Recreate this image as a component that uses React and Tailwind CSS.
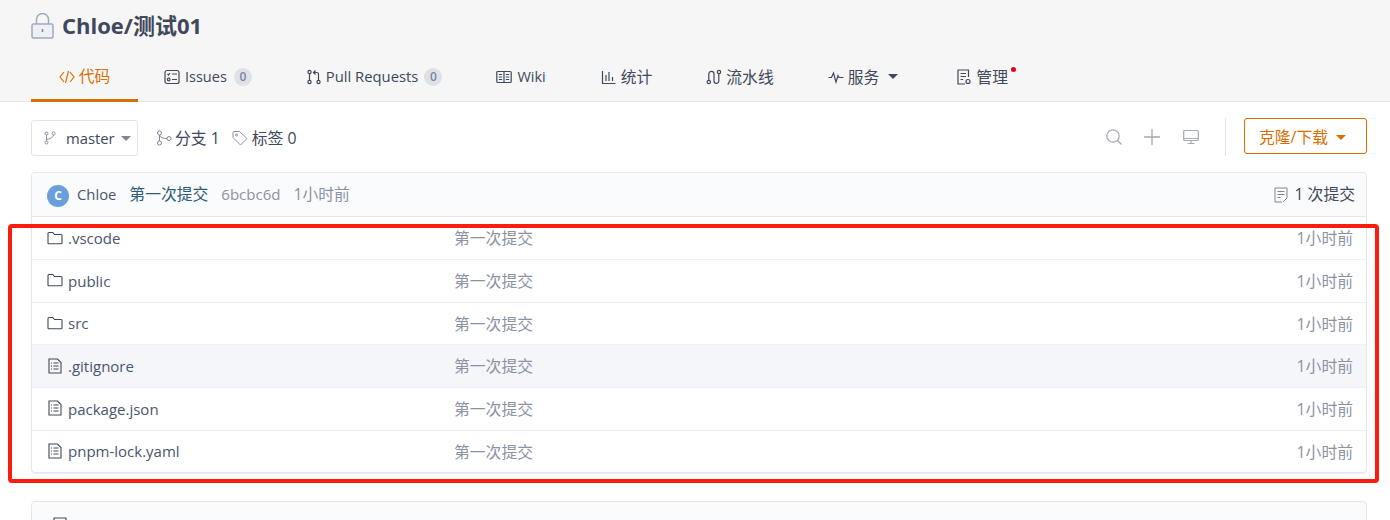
const font = "font-['Open_Sans','Noto_Sans_CJK_SC',sans-serif]"
const cjk = 'text-[15.8px]'

function LockIcon() {
    return (
        <svg width="24" height="26" viewBox="0 0 24 26" fill="none" stroke="#a3a9bc" strokeWidth="1.5">
            <rect x="1" y="11" width="21" height="14" rx="1.5" fill="#eef0f5" />
            <path d="M5.5 11V6.500a6 6 0 0 1 12 0V11" />
            <path d="M11.500 16v3" stroke="#7b8299" />
        </svg>
    )
}

const stroke = { fill: 'none', stroke: 'currentColor', strokeWidth: 1.2 }

const icons = {
    code: <path d="M5 3 1 8l4 5M11 3l4 5-4 5M9.500 2 6.500 14" {...stroke} />,
    issues: (
        <g {...stroke}>
            <rect x="1" y="1.500" width="14" height="13" rx="2" />
            <path d="m3.500 5 1 1 1.500-2M8 5h5M8 10.500h5" />
            <circle cx="4.700" cy="10.500" r="1.300" />
        </g>
    ),
    pull: (
        <g {...stroke}>
            <circle cx="3.500" cy="3" r="1.600" />
            <circle cx="3.500" cy="13" r="1.600" />
            <circle cx="12.500" cy="13" r="1.600" />
            <path d="M3.500 4.600v6.800M12.500 11.400V5.500q0-2-2-2H8M9.500 1.500l-2 2 2 2" />
        </g>
    ),
    wiki: (
        <g {...stroke}>
            <rect x="0.800" y="2.500" width="14.400" height="11" rx="1" />
            <path d="M8 2.500v11M2.800 5.500h3.400M2.800 8h3.400M2.800 10.500h3.400M9.800 5.500h3.400M9.800 8h3.400M9.800 10.500h3.400" />
        </g>
    ),
    stats: <path d="M1.500 2v12.500h13M5 12V6M8 12V3M11.500 12V8" {...stroke} />,
    pipeline: (
        <g {...stroke}>
            <circle cx="2.800" cy="13" r="1.700" />
            <circle cx="13" cy="3" r="1.700" />
            <path d="M2.800 11.300V5a2.600 2.600 0 0 1 5.200 0v7a2.400 2.400 0 0 0 4.800 0V4.700" />
        </g>
    ),
    service: <path d="M0.500 8.500h3l2-4.500 2.500 9 2-6.500 1 2h4.500" {...stroke} />,
    manage: (
        <g {...stroke}>
            <path d="M9 15H2V1h10.500v7" />
            <path d="M4.500 4.500h5.500M4.500 7.500h5.500M4.500 10.500h2.500" />
            <circle cx="12" cy="12.500" r="2" />
        </g>
    ),
}

function TabIcon({ name }) {
    return (
        <svg width="16" height="16" viewBox="0 0 16 16" className="shrink-0">
            {icons[name]}
        </svg>
    )
}

function Caret({ className }) {
    return <span className={`inline-block w-0 h-0 border-x-[5px] border-x-transparent border-t-[5px] ${className}`} />
}

function Count({ n, className }) {
    return <span className={`w-[18px] h-[18px] rounded-full bg-[#dfe1e6] text-[#7c84a3] text-[12px] font-semibold flex items-center justify-center ${className}`}>{n}</span>
}

function Tabs() {
    return (
        <div className="flex h-[49px] items-stretch text-[#40485b] text-[14.5px]">
            <div className="w-[107px] h-[50px] border-b-[3px] border-[#da6f00] text-[#da6f00] flex items-center justify-center gap-[4px] pt-[2px]">
                <TabIcon name="code" />
                <span className={cjk}>代码</span>
            </div>
            <div className="ml-[26px] flex items-center gap-[5px]">
                <TabIcon name="issues" />
                <span>Issues</span>
                <Count n="0" className="ml-[2px]" />
            </div>
            <div className="ml-[54px] flex items-center gap-[4px]">
                <TabIcon name="pull" />
                <span className="text-[14.8px]">Pull Requests</span>
                <Count n="0" className="ml-[2px]" />
            </div>
            <div className="ml-[54px] flex items-center gap-[5px]">
                <TabIcon name="wiki" />
                <span>Wiki</span>
            </div>
            <div className="ml-[55px] flex items-center gap-[4px]">
                <TabIcon name="stats" />
                <span className={`pt-[2px] ${cjk}`}>统计</span>
            </div>
            <div className="ml-[54px] flex items-center gap-[4px]">
                <TabIcon name="pipeline" />
                <span className={`pt-[2px] ${cjk}`}>流水线</span>
            </div>
            <div className="ml-[54px] flex items-center gap-[4px]">
                <TabIcon name="service" />
                <span className={`pt-[2px] ${cjk}`}>服务</span>
                <Caret className="ml-[5px] border-t-[#40485b]" />
            </div>
            <div className="ml-[58px] flex items-center gap-[4px] relative">
                <TabIcon name="manage" />
                <span className={`pt-[2px] ${cjk}`}>管理</span>
                <span className="absolute right-[-8px] top-[15px] w-[5px] h-[5px] rounded-full bg-[#e0001b]" />
            </div>
        </div>
    )
}

function FolderIcon() {
    return (
        <svg width="16" height="16" viewBox="0 0 16 16" fill="none" stroke="#40485b" strokeWidth="1.100" className="shrink-0">
            <path d="M1 13V3.500a1 1 0 0 1 1-1h3.800l1.700 2H14a1 1 0 0 1 1 1V13a.8.8 0 0 1-.8.8H1.800A.8.8 0 0 1 1 13Z" />
        </svg>
    )
}

function FileIcon() {
    return (
        <svg width="16" height="16" viewBox="0 0 16 16" fill="none" stroke="#40485b" strokeWidth="1.100" className="shrink-0">
            <path d="M2 1h8.500L14 4.500V15H2Z" />
            <path d="M4 5h1M4 8h1M4 11h1M6.500 5h5M6.500 8h5M6.500 11h5" />
        </svg>
    )
}

const files = [
    { name: '.vscode', folder: true },
    { name: 'public', folder: true },
    { name: 'src', folder: true },
    { name: '.gitignore', hover: true },
    { name: 'package.json' },
    { name: 'pnpm-lock.yaml' },
]

function FileRow({ file, first }) {
    return (
        <div className={`flex items-center pl-[15px] pr-[13px] ${first ? 'h-[42px]' : 'h-[42.7px] border-t border-[#f0f1f4]'} ${file.hover ? 'bg-[#f5f6f9]' : ''}`}>
            <div className="w-[407px] flex items-center gap-[5px]">
                <div className="-mt-[1px]">{file.folder ? <FolderIcon /> : <FileIcon />}</div>
                <span className="text-[15px] text-[#4a5570]">{file.name}</span>
            </div>
            <span className={`${cjk} pt-[2px] text-[#8c92a4]`}>第一次提交</span>
            <span className={`${cjk} pt-[2px] ml-auto text-[#8c92a4]`}>1小时前</span>
        </div>
    )
}

export default function App() {
    return (
        <div className={`relative w-[1390px] h-[520px] overflow-hidden bg-white ${font}`}>
            <div className="bg-[#f6f6f6] border-b border-[#e3e3e3] h-[102px] px-[31px]">
                <div className="h-[52px] flex items-center gap-[7px] pb-[1px]">
                    <LockIcon />
                    <span className="text-[22px] font-bold text-[#40485b]">Chloe/测试01</span>
                </div>
                <Tabs />
            </div>

            <div className="pl-[31px] pr-[23px]">
                <div className="h-[70px] flex items-start text-[#40485b]">
                    <div className="mt-[18px] flex items-center h-[36px]">
                        <div className="w-[107px] h-[36px] border border-[#e3e5ea] rounded-[3px] flex items-center pl-[12px] text-[14.8px]">
                            <svg width="12" height="14" viewBox="0 0 12 14" fill="none" stroke="#8c92a4" strokeWidth="1">
                                <circle cx="2.500" cy="2.500" r="1.500" />
                                <circle cx="2.500" cy="11.500" r="1.500" />
                                <circle cx="9.500" cy="2.500" r="1.500" />
                                <path d="M2.500 4v6M9.500 4q0 3-7 4.500" />
                            </svg>
                            <span className="ml-[10px]">master</span>
                            <Caret className="ml-[6px] border-t-[#7f8595]" />
                        </div>
                        <svg width="16" height="16" viewBox="0 0 16 16" fill="none" stroke="#7f8595" strokeWidth="1" className="ml-[18px]">
                            <circle cx="3.500" cy="3" r="2" />
                            <circle cx="3.500" cy="13" r="2" />
                            <circle cx="13" cy="8.500" r="2" />
                            <path d="M3.500 5v6M3.500 5q1 3.500 7.500 3.500" />
                        </svg>
                        <span className={`ml-[3px] pt-[2px] ${cjk}`}>分支 1</span>
                        <svg width="16" height="16" viewBox="0 0 16 16" fill="none" stroke="#8c92a4" strokeWidth="1" className="ml-[12px]">
                            <path d="M1 2v5.500L8.500 15 15 8.500 7.500 1.500H1.500Z" />
                            <circle cx="4.500" cy="5" r="1" />
                        </svg>
                        <span className={`ml-[4px] pt-[2px] ${cjk}`}>标签 0</span>
                    </div>

                    <div className="ml-auto mt-[16px] h-[38px] flex items-center text-[#a5a9b5]">
                        <svg width="18" height="18" viewBox="0 0 18 18" fill="none" stroke="currentColor" strokeWidth="1.300">
                            <circle cx="8" cy="8" r="6.200" />
                            <path d="m12.500 12.500 4 4" />
                        </svg>
                        <svg width="16" height="16" viewBox="0 0 16 16" fill="none" stroke="currentColor" strokeWidth="1.300" className="ml-[21px]">
                            <path d="M8 0v16M0 8h16" />
                        </svg>
                        <svg width="16" height="16" viewBox="0 0 16 16" fill="none" stroke="currentColor" strokeWidth="1.200" className="ml-[23px]">
                            <rect x="0.700" y="1.500" width="14.600" height="10" rx="1" />
                            <path d="M4.500 14.500h7M8 11.500v3M1 9.500h14" />
                        </svg>
                        <div className="ml-[26px] w-px h-[38px] bg-[#e3e5ea]" />
                        <div className="ml-[18px] -mt-[2px] w-[123px] h-[36px] border border-[#da6f00] rounded-[3px] flex items-center pl-[14px] gap-[8px] text-[#da6f00]">
                            <span className={`pt-[3px] ${cjk}`}>克隆/下载</span>
                            <Caret className="mt-[2px] border-t-[#da6f00]" />
                        </div>
                    </div>
                </div>

                <div className="border border-[#e6e7eb] rounded-[4px] shadow-[0_1px_1px_#eeeff2]">
                    <div className="h-[44px] bg-[#fafbfc] border-b border-[#e6e7eb] flex items-center pl-[15px] pr-[11px] rounded-t-[4px]">
                        <span className="w-[22px] h-[22px] rounded-full bg-[#6b9fdc] text-white text-[12px] font-bold flex items-center justify-center mt-[2px]">C</span>
                        <span className="ml-[8px] text-[14.8px] text-[#4a5570]">Chloe</span>
                        <span className={`ml-[13px] ${cjk} text-[#2e5a78]`}>第一次提交</span>
                        <span className="ml-[13px] text-[15px] text-[#8c92a4]">6bcbc6d</span>
                        <span className={`ml-[13px] ${cjk} text-[#8c92a4]`}>1小时前</span>
                        <div className="ml-auto flex items-center gap-[6px] text-[#40485b]">
                            <svg width="14" height="16" viewBox="0 0 14 16" fill="none" stroke="#7f8595" strokeWidth="1">
                                <path d="M8 15H1V1h12v10l-4 4M3.500 4.500h7M3.500 7.500h7M3.500 10.500h3" />
                            </svg>
                            <span className={cjk}>1 次提交</span>
                        </div>
                    </div>
                    {files.map((f, i) => <FileRow key={f.name} file={f} first={i === 0} />)}
                </div>

                <div className="mt-[27.5px] h-[40px] border border-[#e6e7eb] rounded-[4px] bg-[#fafbfc] flex items-start pl-[20px] pt-[15px] text-[14.8px] text-[#40485b] font-semibold tracking-[1px]">
                    <svg width="16" height="16" viewBox="0 0 16 16" fill="none" stroke="#40485b" strokeWidth="1.100">
                        <path d="M2 1h12v14H2ZM5 5h6M5 8h6" />
                    </svg>
                    <span className="ml-[6px]">README</span>
                </div>
            </div>

            <div className="absolute left-[8px] top-[224px] w-[1371px] h-[259px] border-[4px] border-[#fb1c10] rounded-[4px] pointer-events-none" />
        </div>
    )
}
